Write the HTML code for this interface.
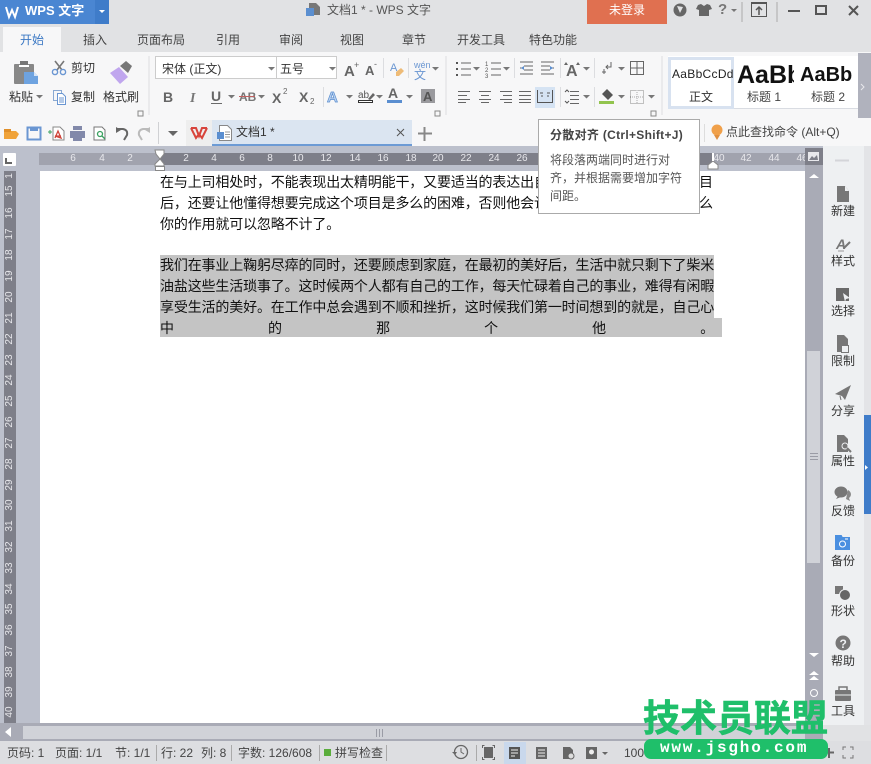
<!DOCTYPE html>
<html lang="zh"><head><meta charset="utf-8"><title>文档1 * - WPS 文字</title>
<style>
html,body{margin:0;padding:0;width:871px;height:764px;overflow:hidden;background:#e1e2e4}
body{position:relative;font-family:"Liberation Sans","WenQuanYi Zen Hei","Noto Sans CJK SC",sans-serif;font-size:12px;color:#444}
.b{position:absolute}
.t{position:absolute;white-space:nowrap;line-height:14px;font-size:12px;color:#444}
.c{transform:translateX(-50%)}
.r{position:absolute;white-space:nowrap;line-height:12px;font-size:10px;color:#e8e8ec;transform:translateX(-50%)}
.v{position:absolute;left:4px;width:12px;text-align:center;line-height:12px;font-size:10px;color:#e8e8ec;transform:rotate(-90deg)}
.l{position:absolute;left:160px;width:554px;height:21px;line-height:21px;font-size:14px;color:#111;white-space:nowrap;letter-spacing:-.15px;font-family:"Liberation Sans","WenQuanYi Zen Hei","Noto Sans CJK SC",sans-serif}
.j{white-space:normal;text-align:justify;text-align-last:justify;overflow:hidden;letter-spacing:-.2px}
svg{position:absolute;left:0;top:0}
</style></head><body>
<!-- backgrounds -->
<div class="b" style="left:0;top:0;width:109px;height:24px;background:#4a86d2"></div>
<div class="b" style="left:95px;top:0;width:14px;height:24px;background:#3f7cc9"></div>
<div class="b" style="left:587px;top:0;width:80px;height:24px;background:#e07050"></div>
<div class="b" style="left:0;top:52px;width:871px;height:94px;background:#f7f7f8"></div>
<div class="b" style="left:3px;top:27px;width:58px;height:25px;background:#f7f7f8"></div>
<div class="b" style="left:0;top:146px;width:823px;height:580px;background:#bcc0cc"></div>
<div class="b" style="left:39px;top:153px;width:766px;height:12px;background:#a1a3ae"></div>
<div class="b" style="left:159px;top:153px;width:554px;height:12px;background:#7e7f89"></div>
<div class="b" style="left:3px;top:153px;width:13px;height:13px;background:#fff;border-radius:1px"></div>
<div class="b" style="left:4px;top:171px;width:12px;height:552px;background:#7e7f89"></div>
<div class="b" style="left:40px;top:171px;width:765px;height:552px;background:#fff"></div>
<div class="b" style="left:805px;top:148px;width:18px;height:578px;background:#a9abb6"></div>
<div class="b" style="left:807px;top:351px;width:13px;height:212px;background:#d0d2d8"></div>
<div class="b" style="left:823px;top:146px;width:41px;height:579px;background:#eef0f2"></div>
<div class="b" style="left:864px;top:146px;width:7px;height:579px;background:#e3e4e7"></div>
<div class="b" style="left:864px;top:415px;width:7px;height:99px;background:#3f7cc9"></div>
<div class="b" style="left:0;top:723px;width:823px;height:18px;background:#a9abb6"></div>
<div class="b" style="left:23px;top:726px;width:782px;height:13px;background:#d0d2d8"></div>
<div class="b" style="left:0;top:741px;width:871px;height:23px;background:#dddee1"></div>
<div class="b" style="left:504px;top:742px;width:22px;height:22px;background:#c9d8ec"></div>
<div class="b" style="left:212px;top:120px;width:200px;height:24px;background:#dbe5f1;border-bottom:2px solid #6d9bd5"></div>
<div class="b" style="left:186px;top:120px;width:26px;height:26px;background:#eeeeee"></div>
<div class="b" style="left:535px;top:87px;width:20px;height:21px;background:#d5e3f3"></div>
<!-- style gallery -->
<div class="b" style="left:668px;top:56px;width:190px;height:52px;background:#fff;border-bottom:1px solid #d9dce2"></div>
<div class="b" style="left:668px;top:57px;width:60px;height:46px;border:3px solid #d8e2f0;background:#fff"></div>
<div class="b" style="left:858px;top:53px;width:13px;height:65px;background:#b0b2bd"></div>
<div class="b" style="left:155px;top:56px;width:182px;height:23px;border:1px solid #ccc;background:#fff;box-sizing:border-box"></div>
<div class="b" style="left:276px;top:56px;width:1px;height:23px;background:#ccc"></div>
<!-- ruler numbers below the corner icon -->
<span class="r" style="left:73px;top:153px">6</span><span class="r" style="left:102px;top:153px">4</span><span class="r" style="left:130px;top:153px">2</span>
<span class="r" style="left:186px;top:153px">2</span><span class="r" style="left:214px;top:153px">4</span><span class="r" style="left:242px;top:153px">6</span><span class="r" style="left:270px;top:153px">8</span><span class="r" style="left:298px;top:153px">10</span><span class="r" style="left:326px;top:153px">12</span><span class="r" style="left:355px;top:153px">14</span><span class="r" style="left:383px;top:153px">16</span><span class="r" style="left:411px;top:153px">18</span><span class="r" style="left:438px;top:153px">20</span><span class="r" style="left:466px;top:153px">22</span><span class="r" style="left:494px;top:153px">24</span><span class="r" style="left:522px;top:153px">26</span>
<span class="r" style="left:719px;top:153px">40</span><span class="r" style="left:746px;top:153px">42</span><span class="r" style="left:774px;top:153px">44</span><span class="r" style="left:802px;top:153px">46</span>
<div class="b" style="left:805px;top:148px;width:18px;height:17px;background:#7e7f89"></div>

<!-- icons -->
<svg width="871" height="764" viewBox="0 0 871 764" fill="none">
<path d="M6 7l3 10 3-7 3 7 3-10" stroke="#fff" stroke-width="2"/>
<path d="M99 10h6l-3 3z" fill="#fff"/>
<path d="M309 3h7l4 4v8h-6v-3h-5z" fill="#777"/><rect x="306" y="8" width="8" height="8" fill="#5b8fd0"/>
<circle cx="680" cy="10" r="6.500" fill="#666"/><path d="M677 6l6 1-3 6z" fill="#e1e2e4"/>
<path d="M698 5l3-1 3 2 3-2 3 1 2 4-3 1v6h-10v-6l-3-1z" fill="#666"/>
<path d="M731 9h6l-3 3z" fill="#777"/>
<path d="M742 2v20M777 2v20" stroke="#aaa"/>
<rect x="751.500" y="3.500" width="15" height="13" stroke="#555" fill="none"/><path d="M759 15V8m-3 2l3-3 3 3" stroke="#555" stroke-width="1.500"/><path d="M751 3h16" stroke="#555" stroke-width="2"/>
<path d="M788 11h12" stroke="#555" stroke-width="2"/>
<rect x="816" y="6" width="10" height="8" stroke="#555" stroke-width="2"/>
<path d="M849 6l9 9m0-9l-9 9" stroke="#555" stroke-width="2"/>
<rect x="14" y="64" width="20" height="20" rx="1" fill="#888"/><rect x="20" y="61" width="8" height="5" fill="#777"/><rect x="19" y="65" width="10" height="2" fill="#fff"/>
<path d="M24 72h10l4 4v8H24z" fill="#6ea3e0"/><path d="M34 72l4 4h-4z" fill="#d6e4f6"/>
<path d="M55 61l7 9M64 61l-7 9" stroke="#777" stroke-width="1.600"/><circle cx="55" cy="72" r="2.600" stroke="#6a96d2" stroke-width="1.400"/><circle cx="63" cy="72" r="2.600" stroke="#6a96d2" stroke-width="1.400"/>
<path d="M53.500 90.500h8v10h-8z" stroke="#8aa9d2"/><path d="M57.500 93.500h5l3 3v8h-8z" fill="#fff" stroke="#6a96d2"/><path d="M59 98h5M59 100h5M59 102h5" stroke="#6a96d2"/>
<path d="M110 73l9-6 9 10-8 7z" fill="#c0a6ee"/><path d="M120 66l6-5 6 5-4 7z" fill="#777"/>
<path d="M138 111h5v5h-5z" stroke="#888"/><path d="M435 111h5v5h-5zM651 111h5v5h-5z" stroke="#888"/>
<path d="M149 56v59M446 56v59M662 56v59" stroke="#dcdde0"/>
<path d="M36 95h7l-3.500 3.500z" fill="#777"/>
<path d="M268 67h7l-3.500 3.500zM329 67h7l-3.500 3.500z" fill="#777"/>
<text x="344" y="76" font-family="Liberation Sans" font-size="15" font-weight="700" fill="#666">A</text><text x="354" y="68" font-size="9" fill="#666" font-family="Liberation Sans">+</text>
<text x="365" y="75" font-family="Liberation Sans" font-size="13" font-weight="700" fill="#666">A</text><text x="374" y="67" font-size="9" fill="#666" font-family="Liberation Sans">-</text>
<path d="M383.500 58v20M408.500 58v20M514.500 58v20M560.500 58v20M594.500 58v20M323.500 87v20" stroke="#dcdde0"/>
<path d="M560.500 87v20M594.500 87v20" stroke="#dcdde0"/>
<text x="390" y="71" font-family="Liberation Sans" font-size="11" fill="#6a96d2">A</text><path d="M396 72l5-4 3 3-5 5h-3z" fill="#eebb77"/>
<text x="414" y="68" font-family="Liberation Sans" font-size="9" fill="#6a96d2">wén</text><text x="414" y="79" font-size="12" fill="#6a96d2" font-family="WenQuanYi Zen Hei">文</text>
<path d="M432 67h7l-3.500 3.500zM473 67h7l-3.500 3.500zM503 67h7l-3.500 3.500zM583 67h7l-3.500 3.500zM618 67h7l-3.500 3.500z" fill="#777"/>
<path d="M461 63h10M461 69h10M461 75h10M491 63h10M491 69h10M491 75h10" stroke="#666"/>
<path d="M456 63h2M456 69h2M456 75h2" stroke="#555" stroke-width="2"/>
<text x="485" y="66" font-size="6" fill="#555" font-family="Liberation Sans">1</text><text x="485" y="72" font-size="6" fill="#555" font-family="Liberation Sans">2</text><text x="485" y="78" font-size="6" fill="#555" font-family="Liberation Sans">3</text>
<path d="M520 62h13M524 66h9M524 70h9M520 74h13M520 68h4" stroke="#666"/>
<path d="M541 62h13M541 66h9M541 70h9M541 74h13M550 68h4" stroke="#666"/>
<path d="M521 68l3-2v4zM553 68l-3-2v4z" fill="#5a8ed0"/>
<text x="566" y="76" font-family="Liberation Sans" font-size="16" font-weight="700" fill="#666">A</text><path d="M566 62l-2 3h4zM578 62l-2 3h4z" fill="#666"/>
<path d="M611 62v5h-5m2-2l-2 2 2 2" stroke="#666"/><path d="M604 69v5M602 72h4" stroke="#666"/>
<path d="M630.500 61.500h13v13h-13zM637 61.500v13M630.500 68h13" stroke="#666"/>
<path d="M458 91.500h12M458 95.500h9M458 99.500h12M458 102.500h8" stroke="#666"/>
<path d="M479 91.500h12M481 95.500h8M479 99.500h12M481 102.500h8" stroke="#666"/>
<path d="M500 91.500h12M503 95.500h9M500 99.500h12M504 102.500h8" stroke="#666"/>
<path d="M519 91.500h12M519 95.500h12M519 99.500h12M519 102.500h12" stroke="#666"/>
<path d="M537.500 90v13M552.500 90v13M537 102.500h16M541 96h2M547 96h2" stroke="#555"/><path d="M540 93h3M547 93h3" stroke="#555"/>
<path d="M570 91.500h9M570 95.500h9M570 99.500h9M570 103.500h9" stroke="#666"/><path d="M565 92l2-2 2 2M565 101l2 2 2-2" stroke="#555"/>
<path d="M583 95h7l-3.500 3.500zM618 95h7l-3.500 3.500zM648 95h7l-3.500 3.500zM346 95h7l-3.500 3.500zM376 95h7l-3.500 3.500zM406 95h7l-3.500 3.500zM228 95h7l-3.500 3.500zM258 95h7l-3.500 3.500z" fill="#777"/>
<path d="M602 94l5-5 6 6-5 5z" fill="#555"/><rect x="599" y="101" width="15" height="3" fill="#92c44e"/>
<path d="M630.500 90.500h13v13h-13z" stroke="#888" stroke-dasharray="1 1"/><path d="M637 90v14M630 97h14" stroke="#aaa" stroke-dasharray="1 1"/>
<text x="163" y="102" font-family="Liberation Sans" font-size="14" font-weight="700" fill="#666">B</text>
<text x="190" y="102" font-family="Liberation Serif" font-size="14" font-style="italic" font-weight="700" fill="#777">I</text>
<text x="211" y="101" font-family="Liberation Sans" font-size="14" font-weight="700" fill="#666">U</text><path d="M211 103.500h11" stroke="#6a6a6a"/>
<text x="239" y="101" font-family="Liberation Sans" font-size="12" font-weight="700" fill="#777">AB</text><path d="M239 96.500h16" stroke="#c06060"/>
<text x="272" y="103" font-family="Liberation Sans" font-size="14" font-weight="700" fill="#666">X</text><text x="283" y="94" font-family="Liberation Sans" font-size="8" fill="#666">2</text>
<text x="299" y="102" font-family="Liberation Sans" font-size="14" font-weight="700" fill="#666">X</text><text x="310" y="104" font-family="Liberation Sans" font-size="8" fill="#666">2</text>
<text x="327" y="102" font-family="Liberation Sans" font-size="15" font-weight="700" fill="#bcd3f0" stroke="#5a8ed0" stroke-width=".7">A</text>
<text x="358" y="98" font-family="Liberation Sans" font-size="10" fill="#555">ab</text><path d="M368 99l5-6 2 2-5 5z" fill="#666"/><rect x="358.500" y="100.500" width="14" height="2" stroke="#333" fill="#fff"/>
<text x="388" y="98" font-family="Liberation Sans" font-size="14" font-weight="700" fill="#666">A</text><rect x="387" y="100" width="15" height="3" fill="#5a8ed0"/>
<rect x="421" y="89" width="14" height="14" fill="#9a9a9e"/><text x="423" y="101" font-family="Liberation Sans" font-size="13" font-weight="700" fill="#555">A</text>
<path d="M861 84l3 3-3 3" stroke="#e8e8ec"/>
<path d="M4 131h12l3 3-3 5H4z" fill="#f0a33a"/><path d="M4 129h7v3H4z" fill="#e08f2a"/>
<path d="M27.500 127.500h13v12h-13z" stroke="#6a96d2" stroke-width="2"/><rect x="30" y="127" width="8" height="4" fill="#6a96d2"/>
<path d="M53 127h7l4 4v9H53z" fill="#fff" stroke="#888"/><path d="M48 132h4m-2-2v4" stroke="#3aa060"/><path d="M55 138l3-7 3 7-6-2h6" stroke="#d0443a" stroke-width="1.300"/>
<rect x="70" y="131" width="15" height="7" fill="#8289aa"/><rect x="73" y="126" width="9" height="4" fill="#8289aa"/><rect x="73" y="137" width="9" height="4" fill="#8289aa"/>
<path d="M94 127h8l3 3v10H94z" stroke="#777" fill="#fff"/><circle cx="100" cy="134" r="2.500" stroke="#3aa060" stroke-width="1.300"/><path d="M102 136l3 3" stroke="#3aa060" stroke-width="1.300"/>
<path d="M117 129h6q5 1 4 6l-3 5" stroke="#666" stroke-width="2"/><path d="M116 133v-6l5 3z" fill="#666"/>
<path d="M149 129h-6q-5 1-4 6l3 5" stroke="#bbb" stroke-width="2"/><path d="M150 133v-6l-5 3z" fill="#bbb"/>
<path d="M158.500 122v22" stroke="#d0d1d4"/>
<path d="M168 131h10l-5 5z" fill="#666"/>
<path d="M191 128h5l3 8 3-8h5M191 128l5 10 3-4 3 4 5-10" stroke="#d8443a" stroke-width="2"/>
<path d="M219.500 125.500h8l4 4v11h-12z" fill="#fff" stroke="#888"/><path d="M225 132h5M225 134.500h5M225 137h5" stroke="#999"/><rect x="217" y="132" width="7" height="7" fill="#5a8ed0"/>
<path d="M397 129l7 7m0-7l-7 7" stroke="#555"/>
<path d="M424.500 127v14M418 133.500h14" stroke="#888" stroke-width="2"/>
<path d="M704.500 124v18" stroke="#ddd"/>
<circle cx="717" cy="130" r="5.500" fill="#f0a04a"/><path d="M714 135l3 5 3-5z" fill="#e08f40"/>
<path d="M155 150h9v4l-4 5-4-5z" fill="#fff" stroke="#888"/><path d="M160 159l4 5v2h-9v-2z" fill="#fff" stroke="#888"/><rect x="155.500" y="166.500" width="9" height="4" fill="#fff" stroke="#888"/>
<path d="M708 165l5-4 5 4v4h-10z" fill="#fff" stroke="#888"/><rect x="712" y="153" width="2" height="8" fill="#fff"/>
<path d="M6 158v5h6" stroke="#666" stroke-width="2"/>
<rect x="808" y="152" width="11" height="9" fill="#e8e8ec"/><path d="M809 160l3-4 2 2 3-3 1 5z" fill="#7e7f89"/>
<path d="M809 178l5-4 5 4z" fill="#fff"/>
<path d="M809 653h10l-5 4z" fill="#fff"/>
<path d="M809 675l5-4 5 4zM809 680l5-4 5 4z" fill="#fff"/>
<circle cx="814" cy="693" r="3.500" stroke="#fff"/>
<path d="M810 453.500h8M810 456.500h8M810 459.500h8" stroke="#9a9ca6"/>
<path d="M376.500 729v8M379.500 729v8M382.500 729v8" stroke="#9a9ca6"/>
<path d="M5 732l6-5v10z" fill="#fff"/>
<path d="M865 465v5l3-2.500z" fill="#fff"/>
<!-- panel icons -->
<path d="M835 160.500h14" stroke="#d4d5d9" stroke-width="2"/>
<path d="M837 186h8l4 5v11h-12z" fill="#777"/><path d="M845 186l4 5h-4z" fill="#eef0f2"/>
<text x="836" y="249" font-family="Liberation Sans" font-size="14" font-weight="700" font-style="italic" fill="#777">A</text><path d="M844 248l6-6" stroke="#777" stroke-width="2"/><path d="M838 251h6" stroke="#999"/>
<rect x="836" y="288" width="13" height="13" fill="#6a6a6a"/><path d="M843 293l7 5-4 1-1 3z" fill="#eef0f2"/>
<path d="M837 335h7l4 4v13h-11z" fill="#777"/><rect x="841.500" y="345.500" width="7" height="7" fill="#eef0f2" stroke="#777"/><path d="M843 345v-2a2 2 0 0 1 4 0v2" stroke="#777"/>
<path d="M835 394l16-9-6 15-3-4z" fill="#777"/><path d="M840 396l1 4" stroke="#777"/>
<path d="M837 435h7l4 4v13h-11z" fill="#777"/><circle cx="845" cy="446" r="3" fill="#777" stroke="#eef0f2"/><path d="M847 448l4 4" stroke="#777" stroke-width="2"/>
<ellipse cx="841" cy="492" rx="6.500" ry="5.500" fill="#777"/><path d="M838 496l-2 3 5-2z" fill="#777"/><path d="M848 490a6 5 0 0 1 1 8l1 3-4-2" fill="#888"/>
<rect x="835" y="537" width="15" height="13" fill="#4a8fe0"/><path d="M835 536h6l1 2h8" stroke="#4a8fe0" stroke-width="2"/><circle cx="842.500" cy="544" r="3" stroke="#fff"/><path d="M845 539h3" stroke="#fff"/>
<rect x="835" y="586" width="8" height="8" fill="#777"/><circle cx="845" cy="595" r="5.500" fill="#666" stroke="#eef0f2"/>
<circle cx="843" cy="643" r="7.500" fill="#777"/><text x="839.500" y="648" font-family="Liberation Sans" font-weight="700" font-size="12" fill="#eef0f2">?</text>
<rect x="835" y="690" width="16" height="11" rx="1" fill="#777"/><path d="M839 690v-3h8v3" stroke="#777" stroke-width="1.500"/><path d="M835 695h16" stroke="#eef0f2"/>
<!-- status -->
<path d="M156.500 745v16M231.500 745v16M319.500 745v16M386.500 745v16M476.500 745v16" stroke="#aaa"/>
<rect x="324" y="749" width="7" height="7" fill="#5aad3c"/>
<circle cx="461" cy="752" r="6.500" stroke="#666" stroke-width="1.300"/><path d="M461 748v4l3 2" stroke="#666"/><path d="M452 752l3 3 2-3z" fill="#666"/>
<rect x="484" y="747" width="9" height="11" fill="#666"/><path d="M482.500 748v-2.500h2M494.500 748v-2.500h-2M482.500 757v2.500h2M494.500 757v2.500h-2" stroke="#666"/>
<rect x="509" y="747" width="11" height="12" fill="#555"/><path d="M511 750h7M511 753h7M511 756h4" stroke="#eee"/>
<rect x="536" y="747" width="11" height="12" fill="#666"/><path d="M538 750h7M538 753h7M538 756h7" stroke="#eee"/>
<path d="M563 747h7l3 3v9h-10z" fill="#666"/><circle cx="571" cy="756" r="3" fill="#ddd" stroke="#666"/>
<rect x="586" y="747" width="11" height="12" fill="#666"/><circle cx="591.500" cy="752" r="2.500" fill="#eee"/><path d="M602 752h6l-3 3z" fill="#666"/>
<path d="M824 752.500h10M829 748v10" stroke="#666" stroke-width="2"/>
<path d="M843 750v-3h3M853 750v-3h-3M843 755v3h3M853 755v3h-3" stroke="#777"/>
</svg>

<!-- title text -->
<span class="t" style="left:25px;top:3px;font-size:13px;font-weight:700;color:#fff;line-height:16px">WPS 文字</span>
<span class="t" style="left:327px;top:3px;color:#555">文档1 * - WPS 文字</span>
<span class="t c" style="left:627px;top:3px;color:#fff">未登录</span>
<span class="t" style="left:718px;top:1px;font-size:15px;line-height:18px;color:#777;font-weight:700">?</span>
<!-- tabs -->
<span class="t" style="left:20px;top:33px;color:#3b78c4">开始</span>
<span class="t" style="left:83px;top:33px">插入</span>
<span class="t" style="left:137px;top:33px">页面布局</span>
<span class="t" style="left:216px;top:33px">引用</span>
<span class="t" style="left:279px;top:33px">审阅</span>
<span class="t" style="left:340px;top:33px">视图</span>
<span class="t" style="left:402px;top:33px">章节</span>
<span class="t" style="left:457px;top:33px">开发工具</span>
<span class="t" style="left:529px;top:33px">特色功能</span>
<!-- ribbon text -->
<span class="t" style="left:9px;top:90px;color:#333">粘贴</span>
<span class="t" style="left:71px;top:61px;color:#333">剪切</span>
<span class="t" style="left:71px;top:90px;color:#333">复制</span>
<span class="t" style="left:103px;top:90px;color:#333">格式刷</span>
<span class="t" style="left:162px;top:62px;color:#333">宋体 (正文)</span>
<span class="t" style="left:280px;top:62px;color:#333">五号</span>
<span class="t" style="left:672px;top:67px;font-size:12px;color:#222;letter-spacing:.3px">AaBbCcDd</span>
<div class="b" style="left:737px;top:60px;width:57px;height:30px;overflow:hidden"><span class="t" style="left:0;top:0;font-size:25px;line-height:30px;font-weight:700;color:#111">AaBb</span></div>
<span class="t" style="left:800px;top:62px;font-size:20px;line-height:26px;font-weight:700;color:#111">AaBb</span>
<span class="t c" style="left:701px;top:90px;color:#333">正文</span>
<span class="t c" style="left:764px;top:90px">标题 1</span>
<span class="t c" style="left:828px;top:90px">标题 2</span>
<!-- qat text -->
<span class="t" style="left:236px;top:125px;color:#333">文档1 *</span>
<span class="t" style="left:726px;top:125px">点此查找命令 (Alt+Q)</span>
<!-- vertical ruler -->
<span class="v" style="top:170px">1</span><span class="v" style="top:185px">15</span><span class="v" style="top:207px">16</span><span class="v" style="top:228px">17</span><span class="v" style="top:249px">18</span><span class="v" style="top:270px">19</span><span class="v" style="top:291px">20</span><span class="v" style="top:312px">21</span><span class="v" style="top:333px">22</span><span class="v" style="top:354px">23</span><span class="v" style="top:374px">24</span><span class="v" style="top:395px">25</span><span class="v" style="top:416px">26</span><span class="v" style="top:437px">27</span><span class="v" style="top:458px">28</span><span class="v" style="top:479px">29</span><span class="v" style="top:499px">30</span><span class="v" style="top:520px">31</span><span class="v" style="top:541px">32</span><span class="v" style="top:562px">33</span><span class="v" style="top:583px">34</span><span class="v" style="top:603px">35</span><span class="v" style="top:624px">36</span><span class="v" style="top:645px">37</span><span class="v" style="top:666px">38</span><span class="v" style="top:686px">39</span><span class="v" style="top:706px">40</span>
<!-- document -->
<div class="b" style="left:160px;top:255px;width:554px;height:64px;background:#c4c4c4"></div>
<div class="b" style="left:160px;top:318px;width:562px;height:19px;background:#c4c4c4"></div>
<div class="l" style="top:172px">在与上司相处时&#xFF0C;不能表现出太精明能干&#xFF0C;又要适当的表达出自己</div>
<div class="l" style="top:172px;left:699px;width:20px">目</div>
<div class="l" style="top:193px">后&#xFF0C;还要让他懂得想要完成这个项目是多么的困难&#xFF0C;否则他会认为</div>
<div class="l" style="top:193px;left:699px;width:20px">么</div>
<div class="l" style="top:214px">你的作用就可以忽略不计了。</div>
<div class="l j" style="top:255px">我们在事业上鞠躬尽瘁的同时&#xFF0C;还要顾虑到家庭&#xFF0C;在最初的美好后&#xFF0C;生活中就只剩下了柴米</div>
<div class="l j" style="top:276px">油盐这些生活琐事了。这时候两个人都有自己的工作&#xFF0C;每天忙碌着自己的事业&#xFF0C;难得有闲暇</div>
<div class="l j" style="top:297px">享受生活的美好。在工作中总会遇到不顺和挫折&#xFF0C;这时候我们第一时间想到的就是&#xFF0C;自己心</div>
<div class="l j" style="top:318px;width:554px">中 的 那 个 他 。</div>
<!-- tooltip -->
<div class="b" style="left:538px;top:119px;width:160px;height:93px;background:#fff;border:1px solid #aaa"></div>
<span class="t" style="left:550px;top:128px;font-weight:700;color:#444;letter-spacing:.3px">分散对齐 (Ctrl+Shift+J)</span>
<span class="t" style="left:550px;top:153px;color:#555">将段落两端同时进行对</span>
<span class="t" style="left:550px;top:171px;color:#555">齐&#xFF0C;并根据需要增加字符</span>
<span class="t" style="left:550px;top:189px;color:#555">间距。</span>
<!-- panel labels -->
<span class="t c" style="left:843px;top:204px;color:#333">新建</span>
<span class="t c" style="left:843px;top:254px;color:#333">样式</span>
<span class="t c" style="left:843px;top:304px;color:#333">选择</span>
<span class="t c" style="left:843px;top:354px;color:#333">限制</span>
<span class="t c" style="left:843px;top:404px;color:#333">分享</span>
<span class="t c" style="left:843px;top:454px;color:#333">属性</span>
<span class="t c" style="left:843px;top:504px;color:#333">反馈</span>
<span class="t c" style="left:843px;top:554px;color:#333">备份</span>
<span class="t c" style="left:843px;top:604px;color:#333">形状</span>
<span class="t c" style="left:843px;top:654px;color:#333">帮助</span>
<span class="t c" style="left:843px;top:704px;color:#333">工具</span>
<!-- status text -->
<span class="t" style="left:7px;top:746px">页码: 1</span>
<span class="t" style="left:55px;top:746px">页面: 1/1</span>
<span class="t" style="left:115px;top:746px">节: 1/1</span>
<span class="t" style="left:161px;top:746px">行: 22</span>
<span class="t" style="left:201px;top:746px">列: 8</span>
<span class="t" style="left:238px;top:746px">字数: 126/608</span>
<span class="t" style="left:335px;top:746px">拼写检查</span>
<span class="t" style="left:624px;top:746px">100</span>
<!-- watermark -->
<div class="b" style="left:644px;top:739px;width:184px;height:20px;border-radius:7px;background:#1fbf6a"></div>
<span class="t" style="left:660px;top:738px;font-size:16px;line-height:20px;font-weight:700;color:#fff;letter-spacing:1.800px;font-family:'Liberation Mono',monospace">www.jsgho.com</span>
<span class="t" style="left:643px;top:690px;font-size:37px;line-height:50px;font-weight:700;color:#1fbf6a;font-family:'Noto Sans CJK SC',sans-serif;-webkit-text-stroke:.6px #1fbf6a">技术员联盟</span>
</body></html>
